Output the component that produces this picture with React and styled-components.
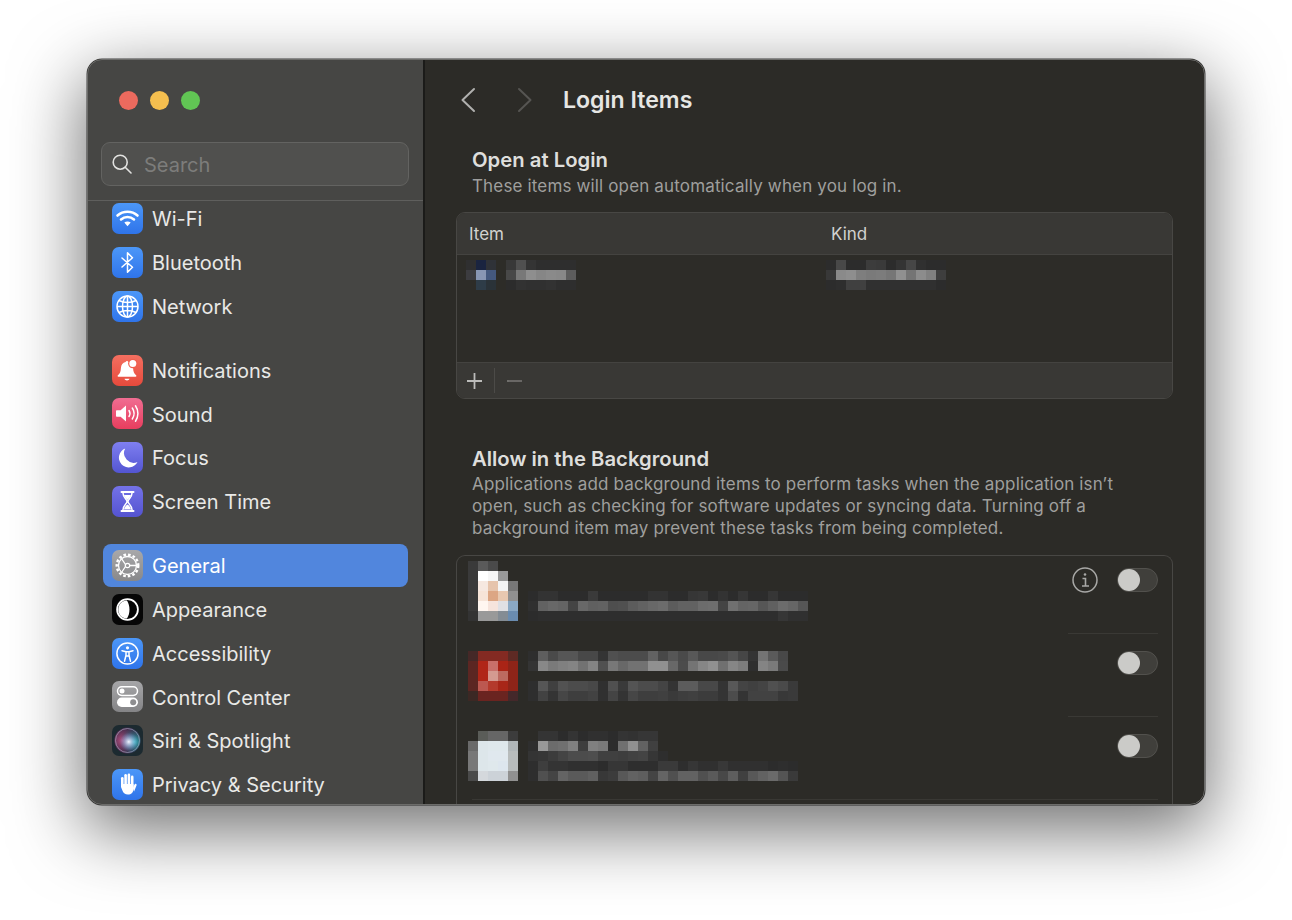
import React from "react";
import styled, { createGlobalStyle } from "styled-components";

const Global = createGlobalStyle`
  html, body { margin: 0; padding: 0; background: #fff; }
  body { font-family: Inter, "Liberation Sans", sans-serif; width: 1292px; height: 920px; overflow: hidden; }
  #root { width: 1292px; height: 920px; padding: 59px 0 0 87px; box-sizing: border-box; }
`;

const Window = styled.div`
  position: relative;
  display: flex;
  width: 1118px;
  height: 746px;
  border-radius: 15px;
  overflow: hidden;
  background: #2c2b27;
  box-shadow: 0 0 0 .5px rgba(0,0,0,.7), 0 22px 70px 4px rgba(0,0,0,.56);
  &::after {
    content: "";
    position: absolute;
    inset: 0;
    border-radius: 15px;
    border: 1.5px solid #6c6c6a;
    pointer-events: none;
  }
`;

const Sidebar = styled.aside`
  flex: 0 0 336px;
  display: flex;
  flex-direction: column;
  background: #464644;
  border-right: 2px solid #1b1b19;
`;
const Traffic = styled.div`
  display: flex;
  gap: 12px;
  padding: 32px 0 32px 32px;
`;
const Light = styled.span`
  width: 19px;
  height: 19px;
  border-radius: 50%;
  background: ${(p) => p.$c};
`;
const SearchBox = styled.div`
  display: flex;
  align-items: center;
  gap: 12px;
  height: 44px;
  box-sizing: border-box;
  margin: 0 14px 14px;
  padding-left: 10px;
  border-radius: 9px;
  background: #50504e;
  border: 1px solid #636361;
  color: #7d7d7b;
  font-size: 20px;
  line-height: 24px;
`;
const SearchLabel = styled.span`
  padding-top: 1px;
`;
const Rule = styled.div`
  height: 1px;
  background: #5f5f5d;
`;
const ListClip = styled.nav`
  flex: 1;
  overflow: hidden;
`;
const List = styled.div`
  margin-top: -4.4px;
  padding: 0 15px 0 16px;
  display: flex;
  flex-direction: column;
  gap: 20px;
`;
const Group = styled.div`
  display: flex;
  flex-direction: column;
`;
const Row = styled.div`
  display: flex;
  align-items: center;
  gap: 9px;
  height: 43.85px;
  padding-left: 9px;
  border-radius: 8px;
  font-size: 20px;
  color: ${(p) => (p.$active ? "#fff" : "#e9e9e7")};
  background: ${(p) => (p.$active ? "#5186dd" : "transparent")};
`;
const RowLabel = styled.span`
  padding-top: 1.2px;
`;
const Tile = styled.span`
  flex: 0 0 31px;
  width: 31px;
  height: 31px;
  border-radius: 7px;
  overflow: hidden;
  background: ${(p) => p.$bg};
  display: flex;
  svg { display: block; }
`;

const Main = styled.main`
  flex: 1;
  min-width: 0;
  overflow: hidden;
  padding: 0 32px 0 31px;
  color: #e4e4e2;
`;
const Nav = styled.header`
  display: flex;
  align-items: center;
  height: 82px;
  padding-left: 4px;
`;
const NavBtn = styled.span`
  display: flex;
  width: ${(p) => p.$w}px;
`;
const Title = styled.h1`
  margin: 0;
  font-size: 23.1px;
  font-weight: 600;
  color: #e6e6e4;
`;
const Heading = styled.h2`
  margin: ${(p) => p.$top}px 0 ${(p) => p.$gap}px 16px;
  font-size: 20.3px;
  line-height: 26px;
  font-weight: 600;
  color: #dededc;
`;
const Sub = styled.p`
  margin: 0 0 ${(p) => p.$bottom}px 16px;
  font-size: 17px;
  letter-spacing: .15px;
  line-height: 22px;
  color: #9f9f9d;
  white-space: nowrap;
`;
const Card = styled.section`
  border: 1px solid #484744;
  border-radius: 9px;
  overflow: hidden;
  background: #2d2c28;
`;
const TableHead = styled.div`
  display: flex;
  align-items: center;
  height: 41px;
  padding-left: 12px;
  background: #393835;
  border-bottom: 1px solid #444340;
  font-size: 17px;
  color: #d2d2d0;
`;
const HeadCol = styled.span`
  width: ${(p) => p.$w}px;
`;
const TableBody = styled.div`
  height: 107px;
  box-sizing: border-box;
  padding-top: 5px;
  display: flex;
  align-items: flex-start;
`;
const BodyCol = styled.div`
  display: flex;
  gap: 10px;
  padding-left: ${(p) => p.$pad}px;
  width: ${(p) => p.$w}px;
  box-sizing: border-box;
`;
const TableFoot = styled.div`
  display: flex;
  align-items: center;
  height: 36px;
  box-sizing: border-box;
  padding-left: 10px;
  background: #393835;
  border-top: 1px solid #444340;
`;
const FootBtn = styled.span`
  display: flex;
`;
const FootSep = styled.span`
  width: 1px;
  height: 25px;
  margin: 0 12px 0 12px;
  background: #4c4b48;
`;
const OpenCard = styled(Card)`
  border-bottom: none;
  border-radius: 9px 9px 0 0;
  height: 300px;
  background: #2c2b27;
`;
const BgRow = styled.div`
  display: flex;
  align-items: flex-start;
  height: ${(p) => p.$h}px;
  padding: 0 14px 0 11px;
`;
const BgMiddle = styled.div`
  flex: 1;
  margin-left: 10px;
`;
const Sep = styled.div`
  height: 1px;
  margin: 0 14px 0 ${(p) => p.$left}px;
  background: ${(p) => p.$c};
`;
const Toggle = styled.span`
  position: relative;
  flex: 0 0 41px;
  height: 24px;
  box-sizing: border-box;
  margin-top: ${(p) => p.$top}px;
  border-radius: 12px;
  background: #403f3b;
  border: 1px solid #52514d;
  &::after {
    content: "";
    position: absolute;
    left: 0;
    top: 0;
    width: 22px;
    height: 22px;
    border-radius: 50%;
    background: #cbcbc8;
  }
`;
const Info = styled.span`
  flex: 0 0 26px;
  height: 26px;
  margin: 11px 19px 0 0;
  display: flex;
`;
const Blur = styled.svg`
  display: block;
  flex: none;
  margin-top: ${(p) => p.$top || 0}px;
`;

/* Censored mosaic: each row is a list of colours, "" is left empty */
const g = (list) => list.map((v) => (v === "" ? "" : v.length === 2 ? `#${v}${v}${v}` : `#${v}`));
function Mosaic({ rows, top }) {
  const w = Math.max(...rows.map((r) => r.length)) * 10;
  const h = rows.length * 10;
  return (
    <Blur $top={top} width={w} height={h} viewBox={`0 0 ${w} ${h}`} shapeRendering="crispEdges">
      {rows.map((r, y) =>
        g(r).map((c, x) => (c ? <rect key={`${x}-${y}`} x={x * 10} y={y * 10} width="10" height="10" fill={c} /> : null))
      )}
    </Blur>
  );
}
const row = (s) => s.split(",");

const M = {
  loginIcon: [row("2f2f30,1a2440,2f3238"), row("3c3c40,8896b4,44587e"), row(",2e3c48,2a3238")],
  loginText: [row("38,50,34,2e,2e,2e,2e"), row("48,78,8e,86,8a,88,5c"), row("2c,32,30,30,32,2e,2e")],
  kindText: [row("2c,48,2c,2c,3c,3a,2c,34,46,30,2c,2c"), row("38,8a,8e,7e,7a,7c,76,90,74,8c,80,3e"), row("2c,2e,40,40,30,30,30,30,30,30,30,2c")],
  i1: [
    row("3a,5a,4a,,"),
    row("3a,ffffff,f6f6f6,99,"),
    row("3a,f6e8e0,e6c4ac,f4f4f4,77"),
    row("3a,f6e4d8,dca684,e8c8b0,90"),
    row("3a,fff6f0,f6e4dc,e0e0e4,8aa8c4"),
    row("33,99,99,848c94,6a8cb0"),
  ],
  t1: [
    row("2c,33,33,2c,2c,2c,3a,2c,2c,2c,2c,2c,33,33,2c,2c,36,38,2c,33,2c,36,2c,2c,36,2c,2c,2c"),
    row("30,62,68,64,44,68,60,62,4e,50,5c,62,68,6c,5c,62,62,6c,6e,44,70,64,66,56,60,6c,66,56"),
    row("2c,2e,2e,2e,2e,2e,2e,2e,2e,2e,2e,2e,2e,2e,2e,2e,2e,2e,2e,2e,2e,2e,2e,2e,2e,36,30,30"),
  ],
  i2: [
    row("452827,842a22,842a22,842a22,5e2a24"),
    row("5c2622,b02618,c8706a,aa2416,8e2418"),
    row("5c2622,b02618,d49a90,bc6a60,8e2418"),
    row("5c2622,bc5850,b43a2c,a82618,8e2418"),
    row("3c2824,6a2420,6a2420,6a2420,44282a"),
  ],
  t2: [
    row("2e,5e,4a,56,56,48,48,34,50,4c,4c,4c,62,48,56,4a,58,48,48,4a,54,46,34,74,5a,48"),
    row("34,88,7a,80,84,72,84,50,78,68,72,72,90,90,68,4c,74,86,90,70,86,7c,2e,84,7a,4a"),
    row(""),
    row("2e,56,40,52,4c,4c,48,30,50,3a,54,4c,4c,44,34,5c,5c,48,48,34,58,44,40,44,50,4a,3a"),
    row("2e,42,34,46,3e,3e,42,30,44,34,46,3e,3e,40,3a,3e,40,3c,3c,34,4c,34,42,42,42,38,3a"),
  ],
  i3: [
    row(",5a5c58,66,66,3c"),
    row("6a,dde6ea,dfe8ec,dfe8ec,b0b6b8"),
    row("78,dde6ea,e0e8ee,e0e8ee,b8bcbc"),
    row("78,dde6ea,dfe8ec,dde6ee,b8bcbc"),
    row("4a,d4d8dc,ccd2d8,ccd2d8,90"),
  ],
  t3: [
    row(",34,34,2c,34,2c,30,30,2c,34,32,36,36"),
    row("2e,98,6c,70,80,3e,80,7a,2c,70,90,62,40"),
    row("34,36,3c,44,4c,4c,4e,40,40,3e,42,44,36,2e"),
    row("2e,3e,34,34,30,30,30,2c,36,36,2e,2e,2e,3a,3a,2e,36,30,30,38,30,30,30,30,2c,2e,2c"),
    row("2e,50,44,64,5a,5a,60,38,3c,58,62,5e,44,64,50,62,62,50,5a,48,5e,40,58,62,6a,54,3a"),
  ],
};

const Svg = ({ children }) => (
  <svg width="31" height="31" viewBox="0 0 31 31" fill="none">{children}</svg>
);

const icons = {
  wifi: (
    <Svg>
      <g stroke="#fff" strokeWidth="2.6" strokeLinecap="round">
        <path d="M5.5 12.5c5.7-5 14.3-5 20 0" />
        <path d="M9 16.4c3.8-3.2 9.2-3.2 13 0" />
      </g>
      <path d="M12.3 19.6c1.9-1.5 4.5-1.5 6.4 0l-3.2 3.6z" fill="#fff" />
    </Svg>
  ),
  bt: (
    <Svg>
      <path d="M10 11 20.5 20.2l-5 5V5.8l5 5L10 20" stroke="#fff" strokeWidth="1.5" strokeLinejoin="round" strokeLinecap="round" />
    </Svg>
  ),
  globe: (
    <Svg>
      <g stroke="#fff" strokeWidth="1.5">
        <circle cx="15.5" cy="15.5" r="10.5" />
        <ellipse cx="15.5" cy="15.5" rx="5" ry="10.5" />
        <path d="M15.5 5v21M5 15.5h21M7 9.500c5 2.600 12 2.600 17 0M7 21.500c5-2.600 12-2.600 17 0" />
      </g>
    </Svg>
  ),
  bell: (
    <Svg>
      <path d="M15 6c.7 0 1.2.4 1.4 1.1 2.800.8 4.500 2.800 4.700 6.100.2 3.600 1.100 5.500 3 7 .6.500.3 1.500-.5 1.500H6.400c-.8 0-1.100-1-.5-1.500 2-1.500 2.800-3.400 3-7 .2-3.300 1.900-5.300 4.700-6.100.2-.7.700-1.100 1.400-1.100z" fill="#fff" />
      <path d="M12.5 23.7h5c-.3 1.200-1.300 1.700-2.500 1.700s-2.200-.5-2.500-1.700z" fill="#fff" />
      <circle cx="20.8" cy="8.6" r="4.7" fill="#f0604f" />
      <circle cx="20.8" cy="8.6" r="3.5" fill="#fff" />
    </Svg>
  ),
  sound: (
    <Svg>
      <path d="M5 12.3h3.600L14 7.600v15.800l-5.400-4.700H5c-.6 0-1-.4-1-1v-4.400c0-.6.400-1 1-1z" fill="#fff" />
      <g stroke="#fff" strokeWidth="1.5" strokeLinecap="round">
        <path d="M17 12.500c1.200 1.800 1.200 4.200 0 6" />
        <path d="M20.300 10c2.200 3.300 2.200 7.700 0 11" />
        <path d="M23.500 7.800c3.200 4.600 3.200 10.800 0 15.400" />
      </g>
    </Svg>
  ),
  moon: (
    <Svg>
      <path d="M13.200 6.500A9.800 9.800 0 1 0 25.500 20 9.700 9.700 0 0 1 13.200 6.500z" fill="#fff" />
    </Svg>
  ),
  hourglass: (
    <Svg>
      <g stroke="#fff" strokeWidth="2" strokeLinecap="round">
        <path d="M9.500 6h12M9.500 25h12" />
      </g>
      <path d="M11 7c0 5 4 6 4 8.500S11 19 11 24M20 7c0 5-4 6-4 8.500s4 3.500 4 8.500" stroke="#fff" strokeWidth="1.5" />
      <path d="M12 9h7c-.5 2.500-2.500 3.500-3.500 5-1-1.500-3-2.500-3.500-5zM15.500 18.500c1.500 1 3 2.500 3.500 5h-7c.5-2.500 2-4 3.500-5z" fill="#fff" />
    </Svg>
  ),
  gear: (
    <Svg>
      <g stroke="#fff">
        <circle cx="15.5" cy="15.5" r="10.8" strokeWidth="2.4" strokeDasharray="2.6 2.05" />
        <circle cx="15.5" cy="15.5" r="9" strokeWidth="1.3" />
        <circle cx="15.5" cy="15.5" r="2.2" strokeWidth="1.2" />
        <path d="M13.500 14.500 9.500 8.600M13.500 16.500l-4 6M17.700 15.500h7" strokeWidth="1.3" />
      </g>
    </Svg>
  ),
  appearance: (
    <Svg>
      <circle cx="15.5" cy="15.5" r="10.4" stroke="#fff" strokeWidth="1.8" />
      <path d="M15 6.500C9.800 6.500 6.300 10.500 6.300 15.500s3.500 9 8.700 9c1.500-2.500 2.500-5.500 2.500-9s-1-6.500-2.500-9z" fill="#fff" />
    </Svg>
  ),
  access: (
    <Svg>
      <circle cx="15.5" cy="15.5" r="10.6" stroke="#fff" strokeWidth="1.5" />
      <circle cx="15.5" cy="9.8" r="1.6" fill="#fff" />
      <path d="M10 12.700l4 1v3.500l-1.500 6M21 12.700l-4 1v3.500l1.500 6M14 13.700h3M14 18h3" stroke="#fff" strokeWidth="1.5" strokeLinecap="round" strokeLinejoin="round" />
    </Svg>
  ),
  control: (
    <Svg>
      <rect x="5.5" y="5.8" width="20" height="8.6" rx="4.3" stroke="#fff" strokeWidth="1.5" />
      <circle cx="10" cy="10.1" r="2.5" fill="#fff" />
      <rect x="5" y="16.5" width="21" height="9.4" rx="4.7" fill="#fff" />
      <circle cx="21.2" cy="21.2" r="3" fill="#8e8e90" />
    </Svg>
  ),
  siri: (
    <Svg>
      <defs>
        <radialGradient id="siriA" cx="0.3" cy="0.5" r="0.6">
          <stop offset="0" stopColor="#e2558a" />
          <stop offset="1" stopColor="#7a1e4c" stopOpacity="0.3" />
        </radialGradient>
        <radialGradient id="siriB" cx="0.75" cy="0.55" r="0.55">
          <stop offset="0" stopColor="#38c6c8" />
          <stop offset="1" stopColor="#164a60" stopOpacity="0.2" />
        </radialGradient>
        <radialGradient id="siriC" cx="0.55" cy="0.55" r="0.35">
          <stop offset="0" stopColor="#f4f6ff" />
          <stop offset="1" stopColor="#8a8ce0" stopOpacity="0" />
        </radialGradient>
      </defs>
      <circle cx="15.5" cy="15.5" r="13" fill="#24253e" />
      <circle cx="15.5" cy="15.5" r="13" fill="url(#siriA)" />
      <circle cx="15.5" cy="15.5" r="13" fill="url(#siriB)" />
      <circle cx="15.5" cy="15.5" r="13" fill="url(#siriC)" />
      <circle cx="15.5" cy="15.5" r="12" stroke="#b6bcd2" strokeOpacity=".55" strokeWidth="1" />
    </Svg>
  ),
  hand: (
    <Svg>
      <g fill="#fff">
        <rect x="9" y="8" width="2.6" height="10" rx="1.3" />
        <rect x="12.3" y="5" width="2.6" height="13" rx="1.3" />
        <rect x="15.6" y="4.6" width="2.6" height="13" rx="1.3" />
        <rect x="18.9" y="6.6" width="2.6" height="12" rx="1.3" />
        <path d="M9 15h12.500v5c0 3.300-2.300 5.600-5.600 5.600-2.900 0-4.300-1.400-5.300-3.500L9 18z" />
        <path d="M20.800 19l1.700-3.500c.7-1.300 2.600-.5 2 1l-2.400 6z" />
      </g>
    </Svg>
  ),
};

const blue = "linear-gradient(#4c97f8, #2f74ea)";
const groups = [
  [
    ["Wi-Fi", blue, icons.wifi],
    ["Bluetooth", blue, icons.bt],
    ["Network", blue, icons.globe],
  ],
  [
    ["Notifications", "linear-gradient(#f46f60, #e64a3c)", icons.bell],
    ["Sound", "linear-gradient(#f06d92, #e83e5e)", icons.sound],
    ["Focus", "linear-gradient(#7f7ff0, #5355d2)", icons.moon],
    ["Screen Time", "linear-gradient(#7472e8, #5453d0)", icons.hourglass],
  ],
  [
    ["General", "linear-gradient(#a8a8aa, #88888a)", icons.gear, true],
    ["Appearance", "#060606", icons.appearance],
    ["Accessibility", blue, icons.access],
    ["Control Center", "linear-gradient(#a6a6a8, #848486)", icons.control],
    ["Siri & Spotlight", "#1c2a30", icons.siri],
    ["Privacy & Security", blue, icons.hand],
  ],
];

export default function App() {
  return (
    <>
      <Global />
      <Window>
        <Sidebar>
          <Traffic>
            <Light $c="#ec6a5e" />
            <Light $c="#f5bf4f" />
            <Light $c="#61c554" />
          </Traffic>
          <SearchBox>
            <svg width="20" height="20" viewBox="0 0 20 20" fill="none" stroke="#e2e2e0" strokeWidth="1.6" strokeLinecap="round">
              <circle cx="8.2" cy="8.2" r="7" />
              <path d="M13.200 13.200 19 19" />
            </svg>
            <SearchLabel>Search</SearchLabel>
          </SearchBox>
          <Rule />
          <ListClip>
            <List>
              {groups.map((items, i) => (
                <Group key={i}>
                  {items.map(([label, bg, icon, active]) => (
                    <Row key={label} $active={active}>
                      <Tile $bg={bg}>{icon}</Tile>
                      <RowLabel>{label}</RowLabel>
                    </Row>
                  ))}
                </Group>
              ))}
            </List>
          </ListClip>
        </Sidebar>
        <Main>
          <Nav>
            <NavBtn $w={56}>
              <svg width="18" height="28" viewBox="0 0 18 28" fill="none" stroke="#b0b0ae" strokeWidth="2" strokeLinecap="round" strokeLinejoin="round">
                <path d="M14 3 2.500 14 14 25" />
              </svg>
            </NavBtn>
            <NavBtn $w={47}>
              <svg width="18" height="28" viewBox="0 0 18 28" fill="none" stroke="#565552" strokeWidth="2" strokeLinecap="round" strokeLinejoin="round">
                <path d="m3 3 11.500 11L3 25" />
              </svg>
            </NavBtn>
            <Title>Login Items</Title>
          </Nav>
          <Heading $top={6} $gap={2}>Open at Login</Heading>
          <Sub $bottom={15}>These items will open automatically when you log in.</Sub>
          <Card>
            <TableHead>
              <HeadCol $w={362}>Item</HeadCol>
              <HeadCol>Kind</HeadCol>
            </TableHead>
            <TableBody>
              <BodyCol $pad={9} $w={369}>
                <Mosaic rows={M.loginIcon} />
                <Mosaic rows={M.loginText} />
              </BodyCol>
              <BodyCol $pad={0}>
                <Mosaic rows={M.kindText} />
              </BodyCol>
            </TableBody>
            <TableFoot>
              <FootBtn>
                <svg width="15" height="16" viewBox="0 0 15 16" stroke="#bcbcba" strokeWidth="1.8">
                  <path d="M7.500 0v16M0 8h15" />
                </svg>
              </FootBtn>
              <FootSep />
              <FootBtn>
                <svg width="15" height="16" viewBox="0 0 15 16" stroke="#6f6e6b" strokeWidth="1.8">
                  <path d="M0 8h15" />
                </svg>
              </FootBtn>
            </TableFoot>
          </Card>
          <Heading $top={47} $gap={1}>Allow in the Background</Heading>
          <Sub $bottom={16}>
            Applications add background items to perform tasks when the application isn’t
            <br />
            open, such as checking for software updates or syncing data. Turning off a
            <br />
            background item may prevent these tasks from being completed.
          </Sub>
          <OpenCard>
            <BgRow $h={77}>
              <Mosaic rows={M.i1} top={5} />
              <BgMiddle>
                <Mosaic rows={M.t1} top={35} />
              </BgMiddle>
              <Info>
                <svg width="26" height="26" viewBox="0 0 26 26" fill="none" stroke="#a8a8a6" strokeWidth="1.5">
                  <circle cx="13" cy="13" r="12" />
                  <path d="M10.500 11.500H13.500V19M10 19h7" strokeWidth="1.6" />
                  <circle cx="13" cy="7.5" r="1.3" fill="#a8a8a6" stroke="none" />
                </svg>
              </Info>
              <Toggle $top={12} />
            </BgRow>
            <Sep $left={611} $c="#3a3935" />
            <BgRow $h={82}>
              <Mosaic rows={M.i2} top={17} />
              <BgMiddle>
                <Mosaic rows={M.t2} top={17} />
              </BgMiddle>
              <Toggle $top={17} />
            </BgRow>
            <Sep $left={611} $c="#3a3935" />
            <BgRow $h={82}>
              <Mosaic rows={M.i3} top={14} />
              <BgMiddle>
                <Mosaic rows={M.t3} top={14} />
              </BgMiddle>
              <Toggle $top={17} />
            </BgRow>
            <Sep $left={15} $c="#393834" />
          </OpenCard>
        </Main>
      </Window>
    </>
  );
}
